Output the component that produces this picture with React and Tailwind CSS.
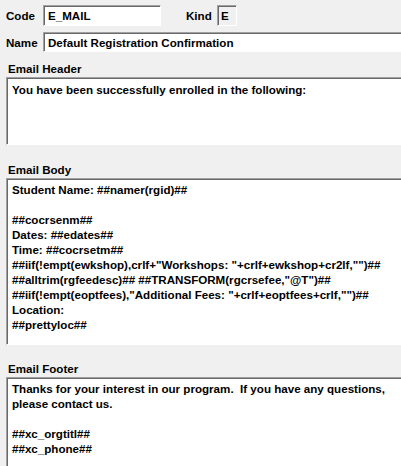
import React from "react";

const font = { fontFamily: '"Liberation Sans", Arial, sans-serif' };

function Sunken({ className = "", children }) {
  return (
    <div
      className={`border border-t-[#a0a0a0] border-l-[#a0a0a0] border-b-white border-r-white shadow-[inset_1px_1px_0_#696969] ${className}`}
    >
      {children}
    </div>
  );
}

const bodyLines = [
  "Student Name: ##namer(rgid)##",
  "",
  "##cocrsenm##",
  "Dates: ##edates##",
  "Time: ##cocrsetm##",
  '##iif(!empt(ewkshop),crlf+"Workshops: "+crlf+ewkshop+cr2lf,"")##',
  '##alltrim(rgfeedesc)## ##TRANSFORM(rgcrsefee,"@T")##',
  '##iif(!empt(eoptfees),"Additional Fees: "+crlf+eoptfees+crlf,"")##',
  "Location:",
  "##prettyloc##",
];

const footerLines = [
  "Thanks for your interest in our program.\u00a0 If you have any questions,",
  "please contact us.",
  "",
  "##xc_orgtitl##",
  "##xc_phone##",
];

function Lines({ lines }) {
  return lines.map((l, i) => (
    <div key={i} className="h-[15px] whitespace-pre">
      {l || "\u00a0"}
    </div>
  ));
}

export default function App() {
  return (
    <div
      className="w-[401px] h-[466px] overflow-hidden bg-[#f0f0f0] text-[11.6px] font-bold text-black leading-[15px]"
      style={font}
    >
      <div className="flex items-center pt-[5px] h-[26px]">
        <span className="w-[43px] pl-[6px]">Code</span>
        <Sunken className="w-[118px] h-[21px] bg-white pl-[4px] flex items-center">E_MAIL</Sunken>
        <span className="ml-[25px] w-[31px]">Kind</span>
        <Sunken className="w-[20px] h-[21px] bg-[#f0f0f0] pl-[3px] flex items-center">E</Sunken>
      </div>
      <div className="flex items-center mt-[6px] h-[20px]">
        <span className="w-[43px] pl-[6px]">Name</span>
        <Sunken className="flex-1 -mr-[4px] h-[20px] bg-white pl-[4px] flex items-center">
          Default Registration Confirmation
        </Sunken>
      </div>

      <div className="pl-[8px] mt-[9px] h-[14px]">Email Header</div>
      <Sunken className="ml-[6px] -mr-[4px] mt-[2px] h-[68px] bg-white pl-[5px] pt-[4px]">
        You have been successfully enrolled in the following:
      </Sunken>

      <div className="pl-[8px] mt-[17px] h-[15px]">Email Body</div>
      <Sunken className="ml-[6px] -mr-[4px] mt-[1px] h-[167px] bg-white pl-[5px] pt-[3px]">
        <Lines lines={bodyLines} />
      </Sunken>

      <div className="pl-[8px] mt-[16px] h-[15px]">Email Footer</div>
      <Sunken className="ml-[6px] -mr-[4px] mt-[1px] h-[100px] bg-white pl-[5px] pt-[3px]">
        <Lines lines={footerLines} />
      </Sunken>
    </div>
  );
}
